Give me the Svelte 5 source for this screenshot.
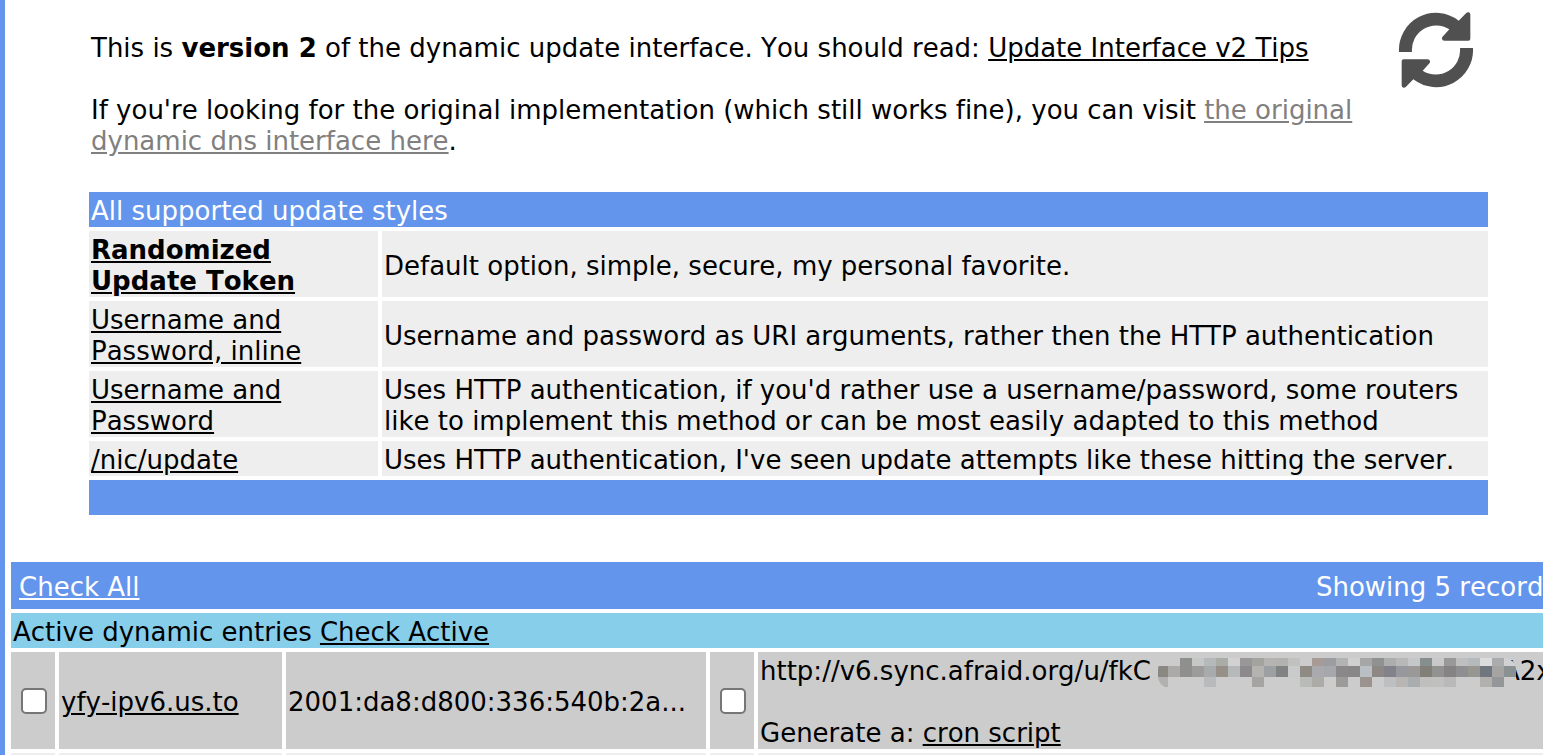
<script>
  const styles = [
    { name: 'Randomized Update Token', strong: true, note: 'Default option, simple, secure, my personal favorite.' },
    { name: 'Username and Password, inline', note: 'Username and password as URI arguments, rather then the HTTP authentication' },
    { name: 'Username and Password', note: "Uses HTTP authentication, if you'd rather use a username/password, some routers like to implement this method or can be most easily adapted to this method" },
    { name: '/nic/update', note: "Uses HTTP authentication, I've seen update attempts like these hitting the server." }
  ];

  // Colours of the mosaic over the token: top, middle and bottom tile of each column.
  const tiles = [
    ['', '#8b8781', '#b3b1af'], ['', '#acaaa8', ''], ['#8f8f8d', '#8f8f8d', ''],
    ['#c6c8c8', '#9d9c9b', ''], ['#b6b9b9', '#a8abab', '#b8babc'], ['#a9aca7', '#969088', ''],
    ['#d2d2d2', '#b6b9b9', ''], ['#9a9798', '#8d8a8d', ''], ['#a3a4a0', '#b5b3b0', '#a5a4a2'],
    ['#b6b4b3', '#9ca0a3', ''], ['#b2b3b1', '#808381', ''], ['#c1c1c0', '#c8cacb', ''],
    ['', '#8f8a84', '#b9bbb9'], ['#a89b96', '#aaaaae', '#adaba8'], ['#9b9da0', '#a5a7aa', ''],
    ['#b3b3b2', '#8a888a', '#9c9b99'], ['#d0d0d0', '#898687', ''], ['#a6a6a6', '#b9bfc3', '#9b938f'],
    ['#8f9290', '#8d8883', ''], ['#aeadae', '#82838a', '#bdbfc0'], ['#b8b8b8', '#96989e', '#b9b5b2'],
    ['#c6c7c8', '#9a9997', '#a9adae'], ['#878e8e', '#827e78', '#bfbfbd'], ['#c9c9c9', '#929290', '#c0c0bf'],
    ['#999999', '#858383', '#b9b9b9'], ['#bfbfbf', '#8f8f92', ''], ['#b5babd', '#979691', ''],
    ['#dcdcdc', '#70767e', '#b2b0ae'], ['#aaacae', '#a6a4a2', '#949699'], ['#d2d2d2', '#8b9093', '']
  ];
  const rows = [[0, 8], [8, 11], [19, 10]];
</script>

<main>
  <section class="intro">
    <div class="copy">
      <p>This is <b>version 2</b> of the dynamic update interface. You should read: <a href="#tips">Update Interface v2 Tips</a></p>
      <p>If you're looking for the original implementation (which still works fine), you can visit <a class="muted" href="#original">the original dynamic dns interface here</a>.</p>
    </div>
    <svg class="sync" viewBox="54 33 228 234" aria-hidden="true">
      <g id="arrow" fill="#505050">
        <path d="M57 156A111 111 0 0 1 236 62L258 40Q262 36 266 37Q271 38 271 44V116Q271 122 265 122H194Q186 122 186 116Q185 113 189 109L208 88A73 73 0 0 0 96 156Z" />
      </g>
      <use href="#arrow" transform="rotate(180 168 150)" />
    </svg>
  </section>

  <table class="styles">
    <colgroup><col class="c-name" /><col /></colgroup>
    <thead><tr><th colspan="2">All supported update styles</th></tr></thead>
    <tbody>
      {#each styles as s}
        <tr>
          <td><a class:strong={s.strong} href="#style">{s.name}</a></td>
          <td>{s.note}</td>
        </tr>
      {/each}
    </tbody>
    <tfoot><tr><td colspan="2">&nbsp;</td></tr></tfoot>
  </table>

  <table class="records">
    <colgroup><col class="c-tick" /><col class="c-host" /><col class="c-addr" /><col class="c-tick" /><col /></colgroup>
    <tbody>
      <tr class="bar">
        <td colspan="5"><div class="split"><a href="#all">Check All</a><span>Showing 5 records</span></div></td>
      </tr>
      <tr class="group"><td colspan="5">Active dynamic entries <a href="#active">Check Active</a></td></tr>
      <tr class="entry">
        <td class="tick"><input type="checkbox" aria-label="yfy-ipv6.us.to" /></td>
        <td><a href="#host">yfy-ipv6.us.to</a></td>
        <td>2001:da8:d800:336:540b:2a...</td>
        <td class="tick"><input type="checkbox" aria-label="2001:da8:d800:336:540b:2a..." /></td>
        <td class="url">
          http://v6.sync.afraid.org/u/fkC<svg class="mosaic" viewBox="0 0 360 30" aria-hidden="true">
            <clipPath id="ends"><rect x="2" width="358" height="30" rx="12" /></clipPath>
            <g clip-path="url(#ends)" shape-rendering="crispEdges">
              <rect y="8" width="12" height="22" fill="#cccccc" />
              <rect x="348" width="12" height="30" fill="#cccccc" />
              {#each tiles as column, i}
                {#each column as fill, j}
                  {#if fill}<rect x={i * 12} y={rows[j][0]} width="12" height={rows[j][1]} {fill} />{/if}
                {/each}
              {/each}
            </g>
          </svg>A2x<br /><br />Generate a: <a href="#cron">cron script</a>
        </td>
      </tr>
      <tr class="next"><td></td><td></td><td></td><td></td><td></td></tr>
    </tbody>
  </table>
</main>

<style>
  :global(body) { background: #fff; overflow: hidden; }
  main {
    border-left: 5px solid cornflowerblue;
    font: 26px/31px Verdana, "DejaVu Sans", sans-serif;
    font-kerning: none;
    font-variant-ligatures: none;
    color: #000;
    height: 100vh;
    overflow: hidden;
  }
  a { color: inherit; text-decoration: underline; }
  .strong { font-weight: bold; }
  .muted { color: gray; }
  .intro {
    display: flex;
    justify-content: space-between;
    margin: 0 69px 0 86px;
    padding-top: 11px;
  }
  .copy { flex: 1; padding-top: 22px; }
  p { margin: 0 0 31px; }
  .sync { width: 76px; height: 78px; flex: none; }
  table { border-collapse: separate; border-spacing: 4px; table-layout: fixed; }
  td, th { padding: 4px 2px 0; text-align: left; font-weight: normal; }
  .styles { width: calc(100% - 131px); margin: 0 51px 0 80px; }
  .styles th, .styles tfoot td { background: cornflowerblue; color: #fff; }
  .styles tbody td { background: #eee; }
  .c-name { width: 289px; }
  .records { width: calc(100% + 24px); margin: 39px 0 0 2px; white-space: nowrap; }
  .c-tick { width: 44px; }
  .c-host { width: 223px; }
  .c-addr { width: 420px; }
  .bar td { background: cornflowerblue; color: #fff; padding: 10px 8px 6px; }
  .split { display: flex; justify-content: space-between; }
  .group td { background: skyblue; }
  .entry td { background: #ccc; }
  .entry .tick { vertical-align: middle; padding: 2px 1px 2px 3px; }
  .url { overflow: hidden; }
  .next td { background: #eee; height: 31px; }
  input {
    appearance: none;
    display: block;
    width: 26px;
    height: 26px;
    margin: 0 auto;
    border: 2px solid #767676;
    border-radius: 5px;
    background: #fff;
  }
  input:checked { background: #0075ff; }
  .mosaic {
    position: relative;
    width: 360px;
    height: 30px;
    margin: 2px -14px -4px 5px;
    vertical-align: top;
  }
</style>
